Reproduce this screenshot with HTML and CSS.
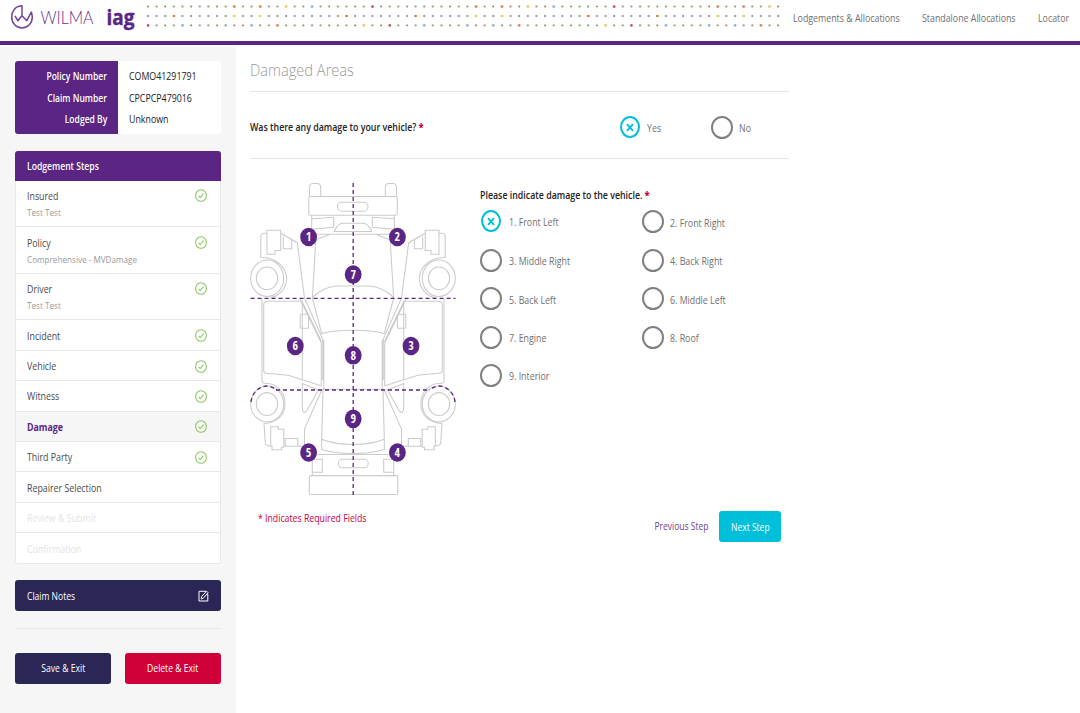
FILE: index.html
```html
<!DOCTYPE html>
<html lang="en">
<head>
<meta charset="utf-8">
<title>Wilma - Damaged Areas</title>
<link rel="stylesheet" href="styles.css">
</head>
<body>
<svg class="defs" width="0" height="0" aria-hidden="true">
  <symbol id="tick" viewBox="0 0 12 13"><ellipse cx="6" cy="6.5" rx="5.4" ry="5.8"/><path d="M3.6 6.9 5.3 8.5 8.5 4.7"/></symbol>
  <symbol id="cross" viewBox="0 0 8 9"><path d="M1 1.2 7 7.8M7 1.2 1 7.8"/></symbol>
</svg>
<header class="header">
  <svg class="brand" width="140" height="41" viewBox="0 0 140 41">
    <g class="brand-mark">
      <path d="M22 15.6V5.8C15.6 5.9 11.7 11 11.7 17c0 6.200 4.500 11 10.300 11s10.300-4.800 10.300-11c0-1.700-.4-3.300-1-4.900L26.800 20.700 22 15.700 17.800 20.700 15 15.900"/>
    </g>
    <text class="wilma" x="40.500" y="24" textLength="53" lengthAdjust="spacingAndGlyphs">WILMA</text>
    <text class="iag" x="106.500" y="25" textLength="28" lengthAdjust="spacingAndGlyphs">iag</text>
  </svg>
  <svg class="dots" width="640" height="41" viewBox="0 0 640 41">
    <defs>
      <pattern id="grid" width="8.633" height="41" patternUnits="userSpaceOnUse">
        <g fill="#92866a"><rect x="3.100" y="5.600" width="1.800" height="1.800"/><rect x="3.100" y="15.100" width="1.800" height="1.800"/><rect x="3.100" y="24.500" width="1.800" height="1.800"/></g>
      </pattern>
      <pattern id="accent" width="241.724" height="41" patternUnits="userSpaceOnUse">
        <g fill="#ef6a32"><rect x="89.400" y="5.600" width="2" height="2"/><rect x="115.300" y="5.600" width="2" height="2"/><rect x="29" y="15" width="2" height="2"/><rect x="201.600" y="15" width="2" height="2"/><rect x="132.500" y="24.400" width="2" height="2"/></g>
        <g fill="#f7dc35"><rect x="141.200" y="5.600" width="2" height="2"/><rect x="89.400" y="15" width="2" height="2"/><rect x="115.300" y="15" width="2" height="2"/><rect x="218.900" y="24.400" width="2" height="2"/></g>
        <g fill="#82b5e3"><rect x="167.100" y="5.600" width="2" height="2"/><rect x="37.600" y="24.400" width="2" height="2"/><rect x="80.700" y="24.400" width="2" height="2"/><rect x="106.600" y="24.400" width="2" height="2"/></g>
        <g fill="#cf2055"><rect x="227.500" y="5.600" width="2" height="2"/><rect x="3.100" y="24.400" width="2" height="2"/></g>
      </pattern>
    </defs>
    <rect width="638" height="41" fill="url(#grid)"/>
    <rect width="638" height="41" fill="url(#accent)"/>
  </svg>
  <nav class="nav">
    <a class="nav-lodge"><span class="t">Lodgements &amp; Allocations</span></a>
    <a class="nav-alone"><span class="t">Standalone Allocations</span></a>
    <a class="nav-loc"><span class="t">Locator</span></a>
  </nav>
</header>
<div class="page">
  <aside class="sidebar">
    <section class="policy">
      <div class="policy-labels"><div><span class="t right">Policy Number</span></div><div><span class="t right">Claim Number</span></div><div><span class="t right">Lodged By</span></div></div>
      <div class="policy-values"><div><span class="t">COMO41291791</span></div><div><span class="t">CPCPCP479016</span></div><div><span class="t">Unknown</span></div></div>
    </section>
    <section class="steps">
      <h2 class="steps-title"><span class="t">Lodgement Steps</span></h2>
      <ul class="steps-list">
        <li class="step tall"><div><span class="t">Insured</span><small class="t">Test Test</small></div><svg class="tick"><use href="#tick"/></svg></li>
        <li class="step tall"><div><span class="t">Policy</span><small class="t">Comprehensive - MVDamage</small></div><svg class="tick"><use href="#tick"/></svg></li>
        <li class="step tall"><div><span class="t">Driver</span><small class="t">Test Test</small></div><svg class="tick"><use href="#tick"/></svg></li>
        <li class="step"><span class="t">Incident</span><svg class="tick"><use href="#tick"/></svg></li>
        <li class="step"><span class="t">Vehicle</span><svg class="tick"><use href="#tick"/></svg></li>
        <li class="step"><span class="t">Witness</span><svg class="tick"><use href="#tick"/></svg></li>
        <li class="step current"><span class="t">Damage</span><svg class="tick"><use href="#tick"/></svg></li>
        <li class="step"><span class="t">Third Party</span><svg class="tick"><use href="#tick"/></svg></li>
        <li class="step"><span class="t">Repairer Selection</span></li>
        <li class="step disabled"><span class="t">Review &amp; Submit</span></li>
        <li class="step disabled"><span class="t">Confirmation</span></li>
      </ul>
    </section>
    <div class="notes"><span class="t">Claim Notes</span>
      <svg class="edit" width="11" height="12" viewBox="0 0 11 12"><path d="M8 1.300H1v9.700h8.800V4M3.200 8.900l.5-2.500L8.600 1.200l1.500 1.500L5.200 8.300z"/></svg>
    </div>
    <div class="exits">
      <button class="btn navy"><span class="t center">Save &amp; Exit</span></button>
      <button class="btn red"><span class="t center">Delete &amp; Exit</span></button>
    </div>
  </aside>
  <main class="main">
    <h1 class="title"><span class="t">Damaged Areas</span></h1>
    <section class="question">
      <div class="question-text"><span class="t">Was there any damage to your vehicle? <b class="req">*</b></span></div>
      <label class="option yes"><span class="radio on"><svg><use href="#cross"/></svg></span><span class="t">Yes</span></label>
      <label class="option"><span class="radio"></span><span class="t">No</span></label>
    </section>
    <section class="damage">
      <svg class="car" width="206" height="316" viewBox="250 181 206 316">
        <defs>
          <g id="side">
            <path d="M309.500 196.500V187.500q0-4 3.500-4h4q3.700 0 3.700 4v9"/>
            <path d="M311.700 215.500V230.500M312 218.700l21.700-1.500v10L312 229.300"/>
            <path d="M353 223.300H343c-4 0-7 4-8.700 8.200H353M353 234.300H317M329.500 234.500 315.500 240M316 236 312.400 298M353 286H336c-9 1-17 5-23.700 11.500M312.300 298l9.500 36M321.700 333.500c9-2.200 20-3.200 31.300-3.200"/>
            <path d="M280.700 233.300 297.300 242.700 304.500 298 322.700 339V380M302 301.300 321.500 341.500M300 299 321.300 343V386M323.800 340V390"/>
            <path d="M267 233.300h-2.500q-3.700 0-3.700 4V257.500c13 0 25 7 25.900 21-.3 10-7.500 18-16.500 19.500"/>
            <path d="M267 230.300h13.700V250.500H275V254.300h-8zM283.300 236.700V248.700h8.400V239.500"/>
            <ellipse cx="267.200" cy="278.300" rx="16.500" ry="18.200"/><ellipse cx="267" cy="278.300" rx="10.700" ry="11.300"/>
            <path d="M262 299V381q0 2.500 4.500 2.500c10 0 18.500 8 18.500 20.500 0 11-8 19-21 19.500L265.300 443q.3 3 5.400 3"/>
            <path d="M263.700 371V305q0-3.700 4-3.700H302.300V380M263.700 370q0 3.300 3 3.300l21.600 2 32.700 10.400"/>
            <rect x="300.200" y="314.300" width="8.400" height="14" rx="1"/>
            <path d="M302.300 383.500V407c0 5 1.500 6.500 4 4.500L318.500 390zM321.700 390 304.500 429V446.300H284M323 389.500 321.700 439V449.500c9 2.700 20 3.900 31.300 3.900M321.700 439.200c9 3.800 20 5.200 31.300 5.200M322 389.300H353"/>
            <ellipse cx="267.200" cy="404" rx="16.500" ry="18"/><ellipse cx="267" cy="404" rx="10.700" ry="11.400"/>
            <path d="M270.700 426.700h7.600V429.300h5.500V447.300H281.600V449.800H272V446H270.700zM285.300 446V438.500H297.700V446"/>
            <path d="M353 454.500H317.500M312.300 454V475.500M312.300 459.300h10v13h-10"/>
          </g>
        </defs>
        <g class="outline">
          <rect x="308.800" y="196.500" width="88.500" height="18.800" rx="1.500"/>
          <rect x="337.500" y="202.300" width="30.500" height="9" rx="4.500"/>
          <rect x="309.300" y="475.600" width="88.500" height="18.800" rx="1.500"/>
          <rect x="338.300" y="459.300" width="30" height="8.500" rx="4.200"/>
          <use href="#side"/>
          <use href="#side" transform="translate(706 0) scale(-1 1)"/>
        </g>
        <g class="guides">
          <path d="M353.200 183V495M250.600 298.400H455.500M276 390H430"/>
          <path d="M251 402C252 392 260 386 267 386c4 0 7 2 10 4M455 402c-1-10-9-16-16-16-4 0-7 2-10 4"/>
        </g>
        <g class="pins">
          <g transform="translate(308.600 237)"><ellipse rx="8.400" ry="9.300"/><text y="4.300">1</text></g>
          <g transform="translate(397.400 237)"><ellipse rx="8.400" ry="9.300"/><text y="4.300">2</text></g>
          <g transform="translate(353.200 274.500)"><ellipse rx="8.400" ry="9.300"/><text y="4.300">7</text></g>
          <g transform="translate(295.300 346)"><ellipse rx="8.400" ry="9.300"/><text y="4.300">6</text></g>
          <g transform="translate(353.200 355.300)"><ellipse rx="8.400" ry="9.300"/><text y="4.300">8</text></g>
          <g transform="translate(411 346)"><ellipse rx="8.400" ry="9.300"/><text y="4.300">3</text></g>
          <g transform="translate(353.200 418.800)"><ellipse rx="8.400" ry="9.300"/><text y="4.300">9</text></g>
          <g transform="translate(308.600 452.500)"><ellipse rx="8.400" ry="9.300"/><text y="4.300">5</text></g>
          <g transform="translate(397.400 452.500)"><ellipse rx="8.400" ry="9.300"/><text y="4.300">4</text></g>
        </g>
      </svg>
      <div class="choices">
        <div class="choices-label"><span class="t">Please indicate damage to the vehicle. <b class="req">*</b></span></div>
        <div class="choices-grid">
          <label class="option"><span class="radio on"><svg><use href="#cross"/></svg></span><span class="t">1. Front Left</span></label>
          <label class="option"><span class="radio"></span><span class="t">2. Front Right</span></label>
          <label class="option"><span class="radio"></span><span class="t">3. Middle Right</span></label>
          <label class="option"><span class="radio"></span><span class="t">4. Back Right</span></label>
          <label class="option"><span class="radio"></span><span class="t">5. Back Left</span></label>
          <label class="option"><span class="radio"></span><span class="t">6. Middle Left</span></label>
          <label class="option"><span class="radio"></span><span class="t">7. Engine</span></label>
          <label class="option"><span class="radio"></span><span class="t">8. Roof</span></label>
          <label class="option"><span class="radio"></span><span class="t">9. Interior</span></label>
        </div>
      </div>
    </section>
    <footer class="actions">
      <div class="required"><span class="t">* Indicates Required Fields</span></div>
      <a class="prev"><span class="t right">Previous Step</span></a>
      <button class="btn next"><span class="t center">Next Step</span></button>
    </footer>
  </main>
</div>
</body>
</html>
```
FILE: styles.css
```css
* { box-sizing: border-box; }
body { margin: 0; height: 713px; overflow: hidden; background: #fff; color: #555; font: 400 10.3px/14px "Open Sans", sans-serif; }
.defs { position: absolute; }

/* Slightly narrowed lettering */
.t { display: inline-block; flex: none; white-space: nowrap; transform: scaleX(.857); transform-origin: left center; }
.t.right { transform-origin: right center; }
.t.center { transform-origin: center; }

.header { display: flex; height: 45px; border-bottom: 4px solid #5a2583; }
.brand, .dots { display: block; flex: none; }
.brand { width: 144px; padding-right: 4px; }
.brand-mark path { fill: none; stroke: #73449b; stroke-width: 1.500; stroke-linejoin: round; }
.wilma { font: 300 17px Lato, sans-serif; fill: #63308c; }
.iag { font: 700 22px "Open Sans", sans-serif; fill: #5a2583; stroke: #5a2583; stroke-width: .4; }
.nav { display: flex; gap: 22px; margin-left: 9px; padding-top: 11px; color: #6f6f6f; }
.nav-lodge { width: 107px; }
.nav-alone { width: 94px; }
.nav-loc { width: 31px; }

.page { display: flex; height: 668px; }
.sidebar { width: 236px; flex: none; margin-top: 2px; padding: 14.400px 15px 0; background: #f6f6f6; }
.policy { display: flex; height: 73px; border-radius: 3px; overflow: hidden; background: #fff; }
.policy-labels, .policy-values { display: grid; grid-template-rows: repeat(3, 21.600px); align-items: center; padding-top: 4px; align-content: start; }
.policy-labels { width: 103px; padding-right: 11px; background: #5a2583; color: #fff; font-weight: 600; text-align: right; justify-items: end; }
.policy-labels .t { transform: scaleX(.83); }
.policy-values { padding-left: 11px; color: #222; }

.steps { margin-top: 16.600px; border-radius: 3px; overflow: hidden; }
.steps-title { display: flex; align-items: center; margin: 0; height: 30px; padding-left: 12px; background: #5a2583; color: #fff; font: inherit; font-weight: 600; }
.steps-title .t { transform: scaleX(.835); }
.steps-list { margin: 0; padding: 0; list-style: none; border: 1px solid #e8e8e8; border-top: 0; border-radius: 0 0 3px 3px; background: #fff; }
.step { display: flex; justify-content: space-between; align-items: center; height: 30.400px; padding: 1px 13px 0 11px; border-bottom: 1px solid #e8e8e8; color: #4a4a4a; }
.step:last-child { height: 30px; border-bottom: 0; }
.step.tall { height: 46.500px; align-items: flex-start; padding-top: 8.500px; }
.step.tall .t { display: block; }
.step small { margin-top: 3px; font-size: 9.500px; color: #9a9a9a; }
.step.current { background: #f6f6f6; color: #5a2583; font-weight: 700; }
.step.disabled { color: #e4e4e4; }
.tick { width: 12px; height: 13px; fill: none; stroke: #8cc762; stroke-width: 1.100; }

.notes { display: flex; justify-content: space-between; align-items: center; height: 31px; margin-top: 16px; padding: 0 12px; border-radius: 3px; background: #2a2757; color: #fff; }
.notes .t { transform: scaleX(.83); }
.edit { fill: none; stroke: #fff; stroke-width: 1; }
.exits { display: flex; justify-content: space-between; margin-top: 16.500px; padding-top: 24px; border-top: 1px solid #e6e6e6; }
.btn { display: flex; align-items: center; justify-content: center; width: 96px; height: 31px; padding: 0; border: 0; border-radius: 3px; color: #fff; font: inherit; }
.btn .t { transform: scaleX(.835); }
.navy { background: #2a2757; }
.red { background: #d00039; }

.main { width: 538.500px; margin-left: 14.400px; }
.title { height: 47px; margin: 0; padding-top: 14px; border-bottom: 1px solid #e6e6e6; color: #9a9a9a; font: 300 17px/22px "Open Sans", sans-serif; }
.title .t { transform: scaleX(.86); }
.question { display: flex; align-items: center; height: 67px; border-bottom: 1px solid #e6e6e6; padding-top: 4px; }
.question-text { width: 368.500px; margin-top: -1px; color: #222; font-weight: 600; }
.req { color: #d00039; }
.option { display: flex; align-items: center; gap: 6.500px; color: #707070; }
.option .t { margin-top: 2px; }
.option.yes { width: 92px; }
.radio { display: grid; place-items: center; flex: none; width: 22px; height: 23px; border: 2px solid #808080; border-radius: 50%; background: #fff; }
.radio.on { width: 20px; height: 22px; margin: 0 1px; border-color: #00bfdb; }
.radio svg { width: 8px; height: 9px; fill: none; stroke: #00bfdb; stroke-width: 1.900; }

.damage { display: flex; height: 338px; padding-top: 22px; }
.car { display: block; flex: none; margin-left: -.4px; }
.outline { fill: none; stroke: #cbcbcb; stroke-width: 1.050; }
.guides { fill: none; stroke: #5a2583; stroke-width: 1.300; stroke-dasharray: 4 3; }
.pins ellipse { fill: #5a2583; }
.pins text { fill: #fff; font: 700 12px "Open Sans Condensed", "Open Sans", sans-serif; font-stretch: 75%; text-anchor: middle; }
.choices { padding: 7.400px 0 0 24px; }
.choices-label { height: 21.800px; color: #222; font-weight: 600; }
.choices-grid { display: grid; grid-template-columns: 161.500px 150px; grid-auto-rows: 38.450px; align-items: start; }

.actions { display: flex; height: 45px; padding: 14px 7px 0 7.500px; }
.required { width: 343px; color: #d00039; }
.required .t { transform: scaleX(.848); }
.prev { display: flex; justify-content: flex-end; width: 108px; padding-top: 8px; color: #6b4590; }
.prev .t { transform: scaleX(.825); }
.next { width: 62px; margin-left: 10px; background: #00bfdb; }
.next .t { transform: scaleX(.825); }
```
